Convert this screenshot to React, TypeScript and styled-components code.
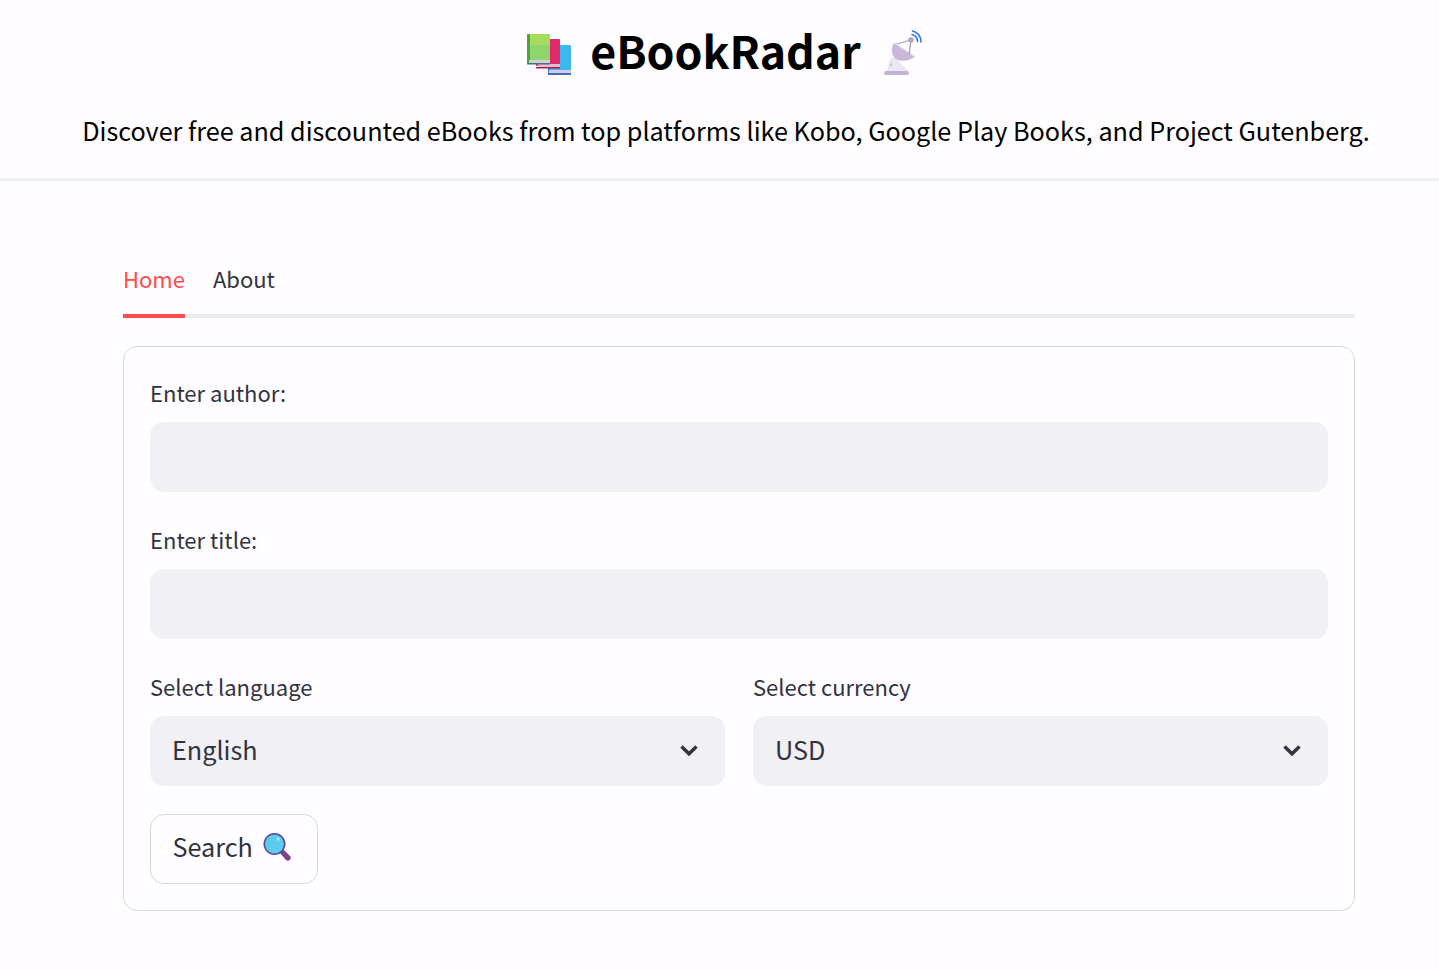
import React from 'react';
import styled, { createGlobalStyle } from 'styled-components';

const GlobalStyle = createGlobalStyle`
  html, body {
    margin: 0;
    padding: 0;
    background: #fffdff;
    font-family: "Noto Sans CJK SC", "Noto Sans", sans-serif;
    color: #31333f;
  }
  * {
    box-sizing: border-box;
  }
`;

const Page = styled.div`
  min-height: 970px;
  display: flex;
  flex-direction: column;
`;

const Header = styled.header`
  height: 181px;
  border-bottom: 3px solid #f0f0f2;
  display: flex;
  flex-direction: column;
  align-items: center;
  padding: 23px 0 0 13px;
  color: #000;
`;

const TitleRow = styled.div`
  display: flex;
  align-items: center;
  height: 58px;
  margin-right: 3px;
`;

const Title = styled.h1`
  margin: 0 22px 4px 18px;
  font-size: 44.7px;
  line-height: 58px;
  font-weight: 700;
`;

const Subtitle = styled.p`
  margin: 20px 0 0;
  font-size: 25.2px;
  line-height: 58px;
  white-space: nowrap;
  height: 58px;
`;

const Main = styled.main`
  width: 1232px;
  margin-left: 123px;
  padding-top: 68px;
`;

const TabList = styled.div`
  display: flex;
  gap: 28px;
  height: 69px;
  border-bottom: 4px solid #ebebee;
`;

const TabItem = styled.div<{ $active?: boolean }>`
  font-size: 22px;
  line-height: 58px;
  height: 69px;
  color: ${(props) => (props.$active ? '#ff4b4b' : '#31333f')};
  border-bottom: 4px solid ${(props) => (props.$active ? '#ff4b4b' : 'transparent')};
`;

const FormCard = styled.form`
  margin-top: 28px;
  height: 565px;
  border: 1.5px solid #d6d6d9;
  border-radius: 14px;
  padding: 26px;
  display: flex;
  flex-direction: column;
`;

const Field = styled.div`
  display: flex;
  flex-direction: column;
  margin-bottom: 28px;
  min-width: 0;
`;

const Label = styled.label`
  font-size: 22px;
  line-height: 38px;
  height: 49px;
  color: #31333f;
`;

const TextInput = styled.input`
  height: 70px;
  width: 100%;
  border: none;
  outline: none;
  border-radius: 14px;
  background: #f0f0f5;
  padding: 0 23px;
  font: inherit;
  font-size: 25.2px;
  color: #31333f;
`;

const Columns = styled.div`
  display: grid;
  grid-template-columns: 1fr 1fr;
  gap: 28px;
`;

const SelectBox = styled.div`
  height: 70px;
  border-radius: 14px;
  background: #f0f0f5;
  padding: 0 23px 4px 22px;
  display: flex;
  align-items: center;
  justify-content: space-between;
  font-size: 25.2px;
  color: #31333f;
`;

const SearchButton = styled.button`
  align-self: flex-start;
  height: 70px;
  width: 168px;
  border: 1.5px solid #d6d6d9;
  border-radius: 14px;
  background: #fffdff;
  display: flex;
  align-items: center;
  gap: 10px;
  font: inherit;
  font-size: 25.2px;
  color: #31333f;
  padding: 0 0 6px 21.5px;
`;

const ChevronSvg = styled.svg`
  flex: none;
  margin: 2px 1px 0 0;
`;

const BooksSvg = styled.svg`
  flex: none;
  margin-top: 6px;
`;

const SatelliteSvg = styled.svg`
  flex: none;
  margin-top: 2px;
`;

const MagnifierSvg = styled.svg`
  flex: none;
  margin-top: 2px;
`;

const Chevron = () => (
  <ChevronSvg width="24" height="24" viewBox="0 0 24 24" fill="none" stroke="#31333f" strokeWidth="3.4">
    <path d="M4.500 8.500 12 15.800l7.500-7.300" />
  </ChevronSvg>
);

const BooksIcon = () => (
  <BooksSvg width="46" height="42" viewBox="0 0 46 42">
    <rect x="22" y="11" width="23" height="28" rx="1" fill="#3fb8ee" />
    <rect x="22" y="11" width="2" height="30" fill="#2f7fd0" />
    <rect x="23" y="36" width="22" height="3" fill="#d9c9e2" />
    <rect x="22" y="39" width="23" height="2" fill="#3f6fc0" />
    <rect x="10" y="5" width="24" height="27" rx="1" fill="#e0296b" />
    <rect x="12" y="30" width="22" height="3" fill="#e6bdd0" />
    <rect x="10" y="33" width="24" height="1.500" fill="#b51a52" />
    <rect x="1" y="0" width="23" height="26" fill="#8ed66c" />
    <rect x="3" y="0" width="21" height="11" fill="#a6dc5a" />
    <rect x="1" y="0" width="3" height="30" fill="#4fa53c" />
    <rect x="3" y="26" width="21" height="3" fill="#d8c8de" />
    <rect x="1" y="29" width="23" height="1.500" fill="#2f7f70" />
  </BooksSvg>
);

const SatelliteIcon = () => (
  <SatelliteSvg width="40" height="46" viewBox="0 0 40 46" fill="none">
    <rect x="1" y="41" width="25" height="4" rx="2" fill="#c4b3d6" />
    <path d="M4 41l3-12 5-2 13 14z" fill="#ebe6f0" />
    <circle cx="8" cy="35" r="1.400" fill="#cfc6d8" />
    <path d="M11 13c-4 6-2 13 2 16 5 3 13 2 19-2z" fill="#c9b8d8" />
    <path d="M11 13l21 14" stroke="#ddd2e6" strokeWidth="1.200" />
    <path d="M14 14l14-4M26 25l2-15" stroke="#a99cb8" strokeWidth="1.300" />
    <circle cx="28" cy="10" r="2.800" fill="#b3a6c2" />
    <path d="M29 4.500a6.500 6.500 0 0 1 5.500 7" stroke="#2e73e6" strokeWidth="1.600" strokeLinecap="round" />
    <path d="M29.500 1a10.500 10.500 0 0 1 8.500 11" stroke="#2e73e6" strokeWidth="1.600" strokeLinecap="round" />
  </SatelliteSvg>
);

const MagnifierIcon = () => (
  <MagnifierSvg width="28" height="28" viewBox="0 0 28 28">
    <path d="M17 20l3.500-3.500 6.500 6.500a2.800 2.800 0 0 1-.2 3.800 2.800 2.800 0 0 1-3.800.2z" fill="#7e3f8c" />
    <circle cx="11.500" cy="11" r="11" fill="#5b4b9a" />
    <circle cx="11.500" cy="11" r="9.400" fill="#5ccbee" />
    <circle cx="15" cy="6" r="1.700" fill="#a6e2f5" />
  </MagnifierSvg>
);

const App = () => {
  return (
    <Page>
      <GlobalStyle />
      <Header>
        <TitleRow>
          <BooksIcon />
          <Title>eBookRadar</Title>
          <SatelliteIcon />
        </TitleRow>
        <Subtitle>Discover free and discounted eBooks from top platforms like Kobo, Google Play Books, and Project Gutenberg.</Subtitle>
      </Header>
      <Main>
        <TabList>
          <TabItem $active>Home</TabItem>
          <TabItem>About</TabItem>
        </TabList>
        <FormCard>
          <Field>
            <Label>Enter author:</Label>
            <TextInput />
          </Field>
          <Field>
            <Label>Enter title:</Label>
            <TextInput />
          </Field>
          <Columns>
            <Field>
              <Label>Select language</Label>
              <SelectBox>
                English
                <Chevron />
              </SelectBox>
            </Field>
            <Field>
              <Label>Select currency</Label>
              <SelectBox>
                USD
                <Chevron />
              </SelectBox>
            </Field>
          </Columns>
          <SearchButton type="button">
            Search
            <MagnifierIcon />
          </SearchButton>
        </FormCard>
      </Main>
    </Page>
  );
};

export default App;
